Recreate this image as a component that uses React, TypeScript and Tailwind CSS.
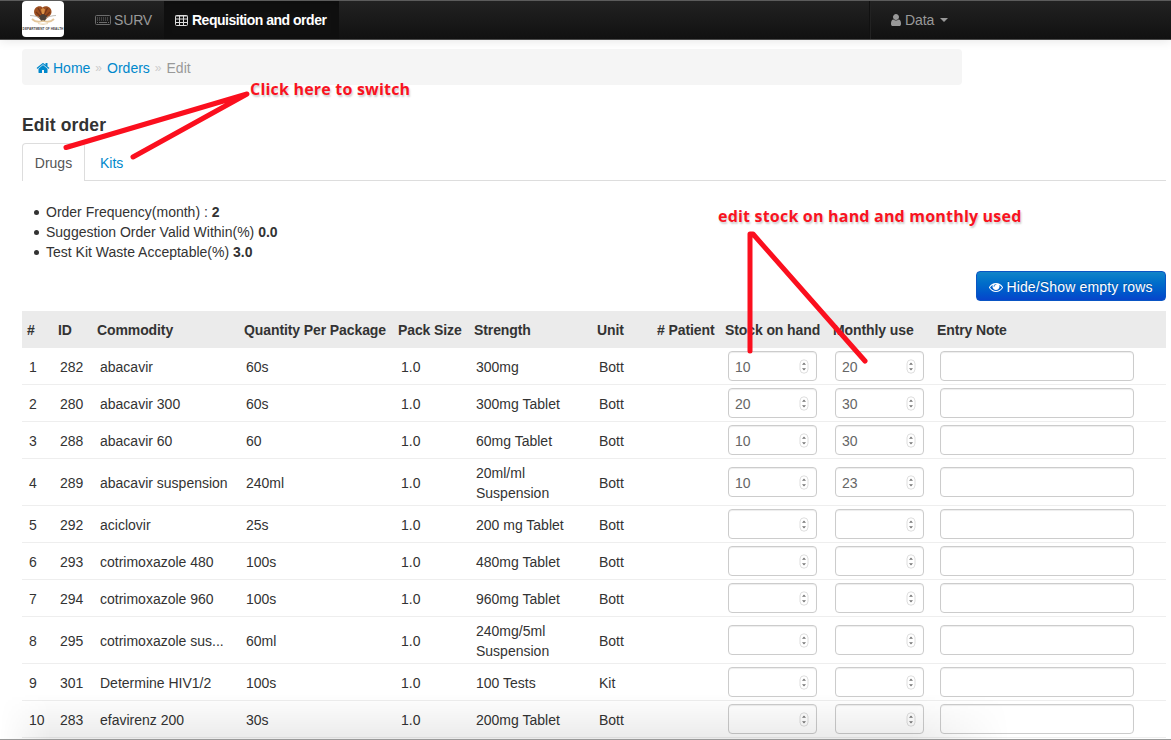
import React from "react";

type Row = {
  id: number;
  name: string;
  qty: string;
  strength: string;
  unit: string;
  stock?: string;
  used?: string;
};

const rows: Row[] = [
  { id: 282, name: "abacavir", qty: "60s", strength: "300mg", unit: "Bott", stock: "10", used: "20" },
  { id: 280, name: "abacavir 300", qty: "60s", strength: "300mg Tablet", unit: "Bott", stock: "20", used: "30" },
  { id: 288, name: "abacavir 60", qty: "60", strength: "60mg Tablet", unit: "Bott", stock: "10", used: "30" },
  { id: 289, name: "abacavir suspension", qty: "240ml", strength: "20ml/ml Suspension", unit: "Bott", stock: "10", used: "23" },
  { id: 292, name: "aciclovir", qty: "25s", strength: "200 mg Tablet", unit: "Bott" },
  { id: 293, name: "cotrimoxazole 480", qty: "100s", strength: "480mg Tablet", unit: "Bott" },
  { id: 294, name: "cotrimoxazole 960", qty: "100s", strength: "960mg Tablet", unit: "Bott" },
  { id: 295, name: "cotrimoxazole sus...", qty: "60ml", strength: "240mg/5ml Suspension", unit: "Bott" },
  { id: 301, name: "Determine HIV1/2", qty: "100s", strength: "100 Tests", unit: "Kit" },
  { id: 283, name: "efavirenz 200", qty: "30s", strength: "200mg Tablet", unit: "Bott" },
];

const headers = [
  "#",
  "ID",
  "Commodity",
  "Quantity Per Package",
  "Pack Size",
  "Strength",
  "Unit",
  "# Patient",
  "Stock on hand",
  "Monthly use",
  "Entry Note",
];

function Glyph({ d, className }: { d: string; className: string }) {
  return (
    <svg viewBox="0 0 1792 1792" fill="currentColor" className={className}>
      <path d={d} />
    </svg>
  );
}

const HOME =
  "M1472 992v480q0 26-19 45t-45 19h-384v-384h-256v384h-384q-26 0-45-19t-19-45v-480q0-1 .5-3t.5-3l575-474 575 474q1 2 1 6zm223-69l-62 74q-8 9-21 11h-3q-13 0-21-7l-692-577-692 577q-12 8-24 7-13-2-21-11l-62-74q-8-10-7-23.5t11-21.5l719-599q32-26 76-26t76 26l244 204v-195q0-14 9-23t23-9h192q14 0 23 9t9 23v408l219 182q10 8 11 21.5t-7 23.5z";
const USER =
  "M1536 1399q0 109-62.5 187t-150.5 78h-854q-88 0-150.5-78t-62.5-187q0-85 8.5-160.5t31.5-152 58.5-131 94-89 134.5-34.5q131 128 313 128t313-128q76 0 134.5 34.5t94 89 58.5 131 31.5 152 8.5 160.5zm-256-887q0 159-112.5 271.5t-271.5 112.5-271.5-112.5-112.5-271.5 112.5-271.5 271.5-112.5 271.5 112.5 112.5 271.5z";
const EYE =
  "M1664 960q-152-236-381-353 61 104 61 225 0 185-131.5 316.5t-316.5 131.5-316.5-131.5-131.5-316.5q0-121 61-225-229 117-381 353 133 205 333.5 326.5t434.5 121.5 434.5-121.5 333.5-326.5zm-720-384q0-20-14-34t-34-14q-125 0-214.5 89.5t-89.5 214.5q0 20 14 34t34 14 34-14 14-34q0-86 61-147t147-61q20 0 34-14t14-34zm848 384q0 34-20 69-140 230-376.5 368.5t-499.5 138.5-499.5-139-376.5-368q-20-35-20-69t20-69q140-229 376.5-368t499.5-139 499.5 139 376.5 368q20 35 20 69z";

function Logo() {
  return (
    <div className="flex h-9 w-[42px] flex-col items-center rounded-[4px] bg-white pt-1">
      <svg viewBox="0 0 28 22" className="h-[22px] w-7">
        <path d="M13.5 2.500C12 .8 8.500 1 6.500 3C4.300 5.500 4.800 9 7 11L11.500 14.500H16.500L20.500 11C23 9 23.200 5.500 21 3C19 1 15.500 .8 13.500 2.500Z" fill="#9c4f20" />
        <path d="M9 3L13 10M18.500 3L15 10M7 7L12 12M21 7L16 12" stroke="#74371a" strokeWidth="1.200" />
        <path d="M12 4.500L14 3L16 4.500L15 9H13Z" fill="#d99046" />
        <path d="M1 10.500C5 10.500 9 12 12 13L14 10.500L16 13C19 12 23 10.500 27 10.500" fill="none" stroke="#b5b3ad" strokeWidth="0.900" />
        <path d="M10 11L14 9L18 11L16 16H12Z" fill="#4b4139" />
        <path d="M3 14C7 18 11 17 14 16C17 17 21 18 25 14" fill="none" stroke="#e3c69b" strokeWidth="1.800" />
        <path d="M9 18.500Q14 20 19 18.500" fill="none" stroke="#ecd8b8" strokeWidth="1.300" />
      </svg>
      <div className="w-[42px] text-center text-[3.2px] leading-[4px] font-bold whitespace-nowrap text-[#444]">DEPARTMENT OF HEALTH</div>
    </div>
  );
}

function NavBar() {
  return (
    <nav className="flex h-10 shrink-0 border-t border-b border-t-[#5c5c5c] border-b-[#4a4a4a] bg-gradient-to-b from-[#222] to-[#111] pl-[22px] text-[14px] text-[#999] shadow-[0_1px_10px_rgba(0,0,0,0.1)]">
      <Logo />
      <a className="ml-5 flex w-[80px] items-center pl-[11px] tracking-[-0.15px]">
        <svg viewBox="0 0 16 10" className="mr-[3px] h-2.5 w-4 text-[#6c6c6c]" fill="none" stroke="currentColor">
          <rect x="0.500" y="0.500" width="15" height="9" rx="1" />
          <path d="M2 3H14M2 5H14" strokeDasharray="1 1" />
          <path d="M2 7.500H3M4 7.500H12M13 7.500H14" />
        </svg>
        SURV
      </a>
      <a className="flex w-[175px] items-center bg-[#101010] pl-[11px] font-bold tracking-[-0.49px] text-white shadow-[inset_0_3px_8px_rgba(0,0,0,0.125)]">
        <svg viewBox="0 0 13 11" className="mr-1 h-[11px] w-[13px] text-[#ddd]" fill="none" stroke="currentColor">
          <rect x="0.500" y="0.500" width="12" height="10" rx="1" />
          <path d="M0.500 1H12.500M0.500 4H12.500M0.500 7.500H12.500M4.500 1V10.500M8.500 1V10.500" />
        </svg>
        Requisition and order
      </a>
      <a className="ml-[530px] flex items-center border-l border-[#111] pl-[19px] shadow-[inset_1px_0_0_#222]">
        <Glyph d={USER} className="mr-[2px] h-3.5 w-3.5" />
        <span className="tracking-[-0.1px]">Data</span>
        <span className="ml-1.5 border-x-4 border-t-4 border-x-transparent border-t-[#999]" />
      </a>
    </nav>
  );
}

function NumberField({ value }: { value?: string }) {
  return (
    <div className="flex h-[30px] w-[89px] items-center rounded-[4px] border border-[#ccc] bg-white pt-px pr-[7px] pl-1.5 shadow-[inset_0_1px_1px_rgba(0,0,0,0.075)]">
      <input type="text" defaultValue={value} className="w-full min-w-0 bg-transparent text-[14px] leading-5 text-[#666] outline-none" />
      <svg viewBox="0 0 10 15" className="-mt-px h-[15px] w-2.5 shrink-0">
        <rect x="1" y="0.800" width="8" height="13.400" rx="4" fill="#fff" stroke="#d5d5d5" strokeWidth="0.800" />
        <path d="M3 5.800L5 3.600L7 5.800ZM3 9.200L5 11.400L7 9.200Z" fill="#777" />
      </svg>
    </div>
  );
}

function OrderTable() {
  return (
    <table className="mt-2.5 w-[1144px] table-fixed border-separate border-spacing-0 text-left text-[14px] leading-5 text-[#333] [&_tbody_td]:border-b [&_tbody_td]:border-[#eee]">
      <colgroup>
        <col className="w-[31px]" />
        <col className="w-[39px]" />
        <col className="w-[147px]" />
        <col className="w-[154px]" />
        <col className="w-[76px]" />
        <col className="w-[123px]" />
        <col className="w-[60px]" />
        <col className="w-[68px]" />
        <col className="w-[108px]" />
        <col className="w-[104px]" />
        <col className="w-[234px]" />
      </colgroup>
      <thead>
        <tr className="h-[37px] bg-[#ebebeb]">
          {headers.map((h) => (
            <th key={h} className="p-0 pt-px pl-[5px] font-bold tracking-[-0.1px] whitespace-nowrap">
              {h}
            </th>
          ))}
        </tr>
      </thead>
      <tbody>
        {rows.map((r, i) => (
          <tr key={r.id} className={r.strength.includes("Suspension") ? "h-[47px]" : "h-[37px]"}>
            <td className="p-0 pt-0.5 pl-[7px]">{i + 1}</td>
            <td className="p-0 pt-0.5 pl-[7px]">{r.id}</td>
            <td className="p-0 pt-0.5 pl-2 whitespace-nowrap">{r.name}</td>
            <td className="p-0 pt-0.5 pl-[7px]">{r.qty}</td>
            <td className="p-0 pt-0.5 pl-2">1.0</td>
            <td className="p-0 pt-0.5 pr-5 pl-[7px]">{r.strength}</td>
            <td className="p-0 pt-0.5 pl-[7px]">{r.unit}</td>
            <td className="p-0" />
            <td className="p-0 pl-2">
              <NumberField value={r.stock} />
            </td>
            <td className="p-0 pl-[7px]">
              <NumberField value={r.used} />
            </td>
            <td className="p-0 pl-2">
              <input type="text" className="block h-[30px] w-[194px] rounded-[4px] border border-[#ccc] bg-white px-1.5 text-[14px] shadow-[inset_0_1px_1px_rgba(0,0,0,0.075)] outline-none" />
            </td>
          </tr>
        ))}
      </tbody>
    </table>
  );
}

function Annotations() {
  return (
    <div className="pointer-events-none absolute inset-0 font-['Open_Sans',sans-serif] text-[16px] leading-5 font-bold tracking-[0.2px] text-[#f9131f] [text-shadow:1px_2px_2px_rgba(0,0,0,0.2)]">
      <svg viewBox="0 0 1171 740" className="absolute inset-0 h-full w-full" fill="none" stroke="#fb0f1e" strokeWidth="5" strokeLinecap="round" strokeLinejoin="round">
        <path d="M66 147.500L247 94L133 157" />
        <path d="M750 351V234L753 234L865 361" />
      </svg>
      <span className="absolute top-[79px] left-[250px] whitespace-nowrap">Click here to switch</span>
      <span className="absolute top-[206px] left-[718px] whitespace-nowrap">edit stock on hand and monthly used</span>
    </div>
  );
}

export default function App() {
  return (
    <div className="relative flex h-[740px] w-[1171px] flex-col overflow-hidden bg-white font-['Liberation_Sans',Arial,sans-serif] text-[14px] leading-5 text-[#333]">
      <NavBar />
      <main className="pl-[22px]">
        <div className="mt-[9px] flex h-9 w-[940px] items-center rounded-[4px] bg-[#f5f5f5] pt-px pl-3.5 text-[#0088cc]">
          <Glyph d={HOME} className="mr-[3px] h-3.5 w-3.5" />
          <a>Home</a>
          <span className="px-[5px] text-[12px] text-[#ccc]">»</span>
          <a>Orders</a>
          <span className="px-[5px] text-[12px] text-[#ccc]">»</span>
          <span className="text-[#999]">Edit</span>
        </div>
        <h1 className="mt-[30px] text-[17.5px] leading-5 font-bold tracking-[0.15px]">Edit order</h1>
        <div className="mt-2 flex h-[38px] w-[1144px]">
          <a className="flex w-[63px] items-center justify-center rounded-t-[4px] border border-b-0 border-[#ddd] text-[#555]">Drugs</a>
          <a className="flex grow items-center border-b border-[#ddd] pt-0.5 pl-[15px] text-[#0088cc]">Kits</a>
        </div>
        <ul className="mt-[21px] pl-3">
          {[
            ["Order Frequency(month) :", "2"],
            ["Suggestion Order Valid Within(%)", "0.0"],
            ["Test Kit Waste Acceptable(%)", "3.0"],
          ].map(([label, value]) => (
            <li key={label} className="flex items-center whitespace-nowrap">
              <span className="mr-[7px] h-[5px] w-[5px] rounded-full bg-[#333]" />
              {label}&nbsp;<b>{value}</b>
            </li>
          ))}
        </ul>
        <div className="mt-[9px] flex w-[1144px] justify-end">
          <button className="flex h-[30px] w-[190px] items-center justify-center rounded-[4px] border border-[#0a55c4] bg-gradient-to-b from-[#1284c8] to-[#0844cb] pt-px tracking-[0.15px] whitespace-nowrap text-white [text-shadow:0_-1px_0_rgba(0,0,0,0.25)]">
            <Glyph d={EYE} className="mr-[3px] h-3.5 w-3.5" />
            Hide/Show empty rows
          </button>
        </div>
        <OrderTable />
      </main>
      <div className="pointer-events-none absolute bottom-0 left-0 h-[46px] w-[1010px] bg-gradient-to-b from-transparent to-black/8 [mask-image:linear-gradient(to_right,transparent,black_50px,black_910px,transparent)]" />
      <div className="absolute bottom-0 left-0 h-px w-full bg-[#999]" />
      <Annotations />
    </div>
  );
}
